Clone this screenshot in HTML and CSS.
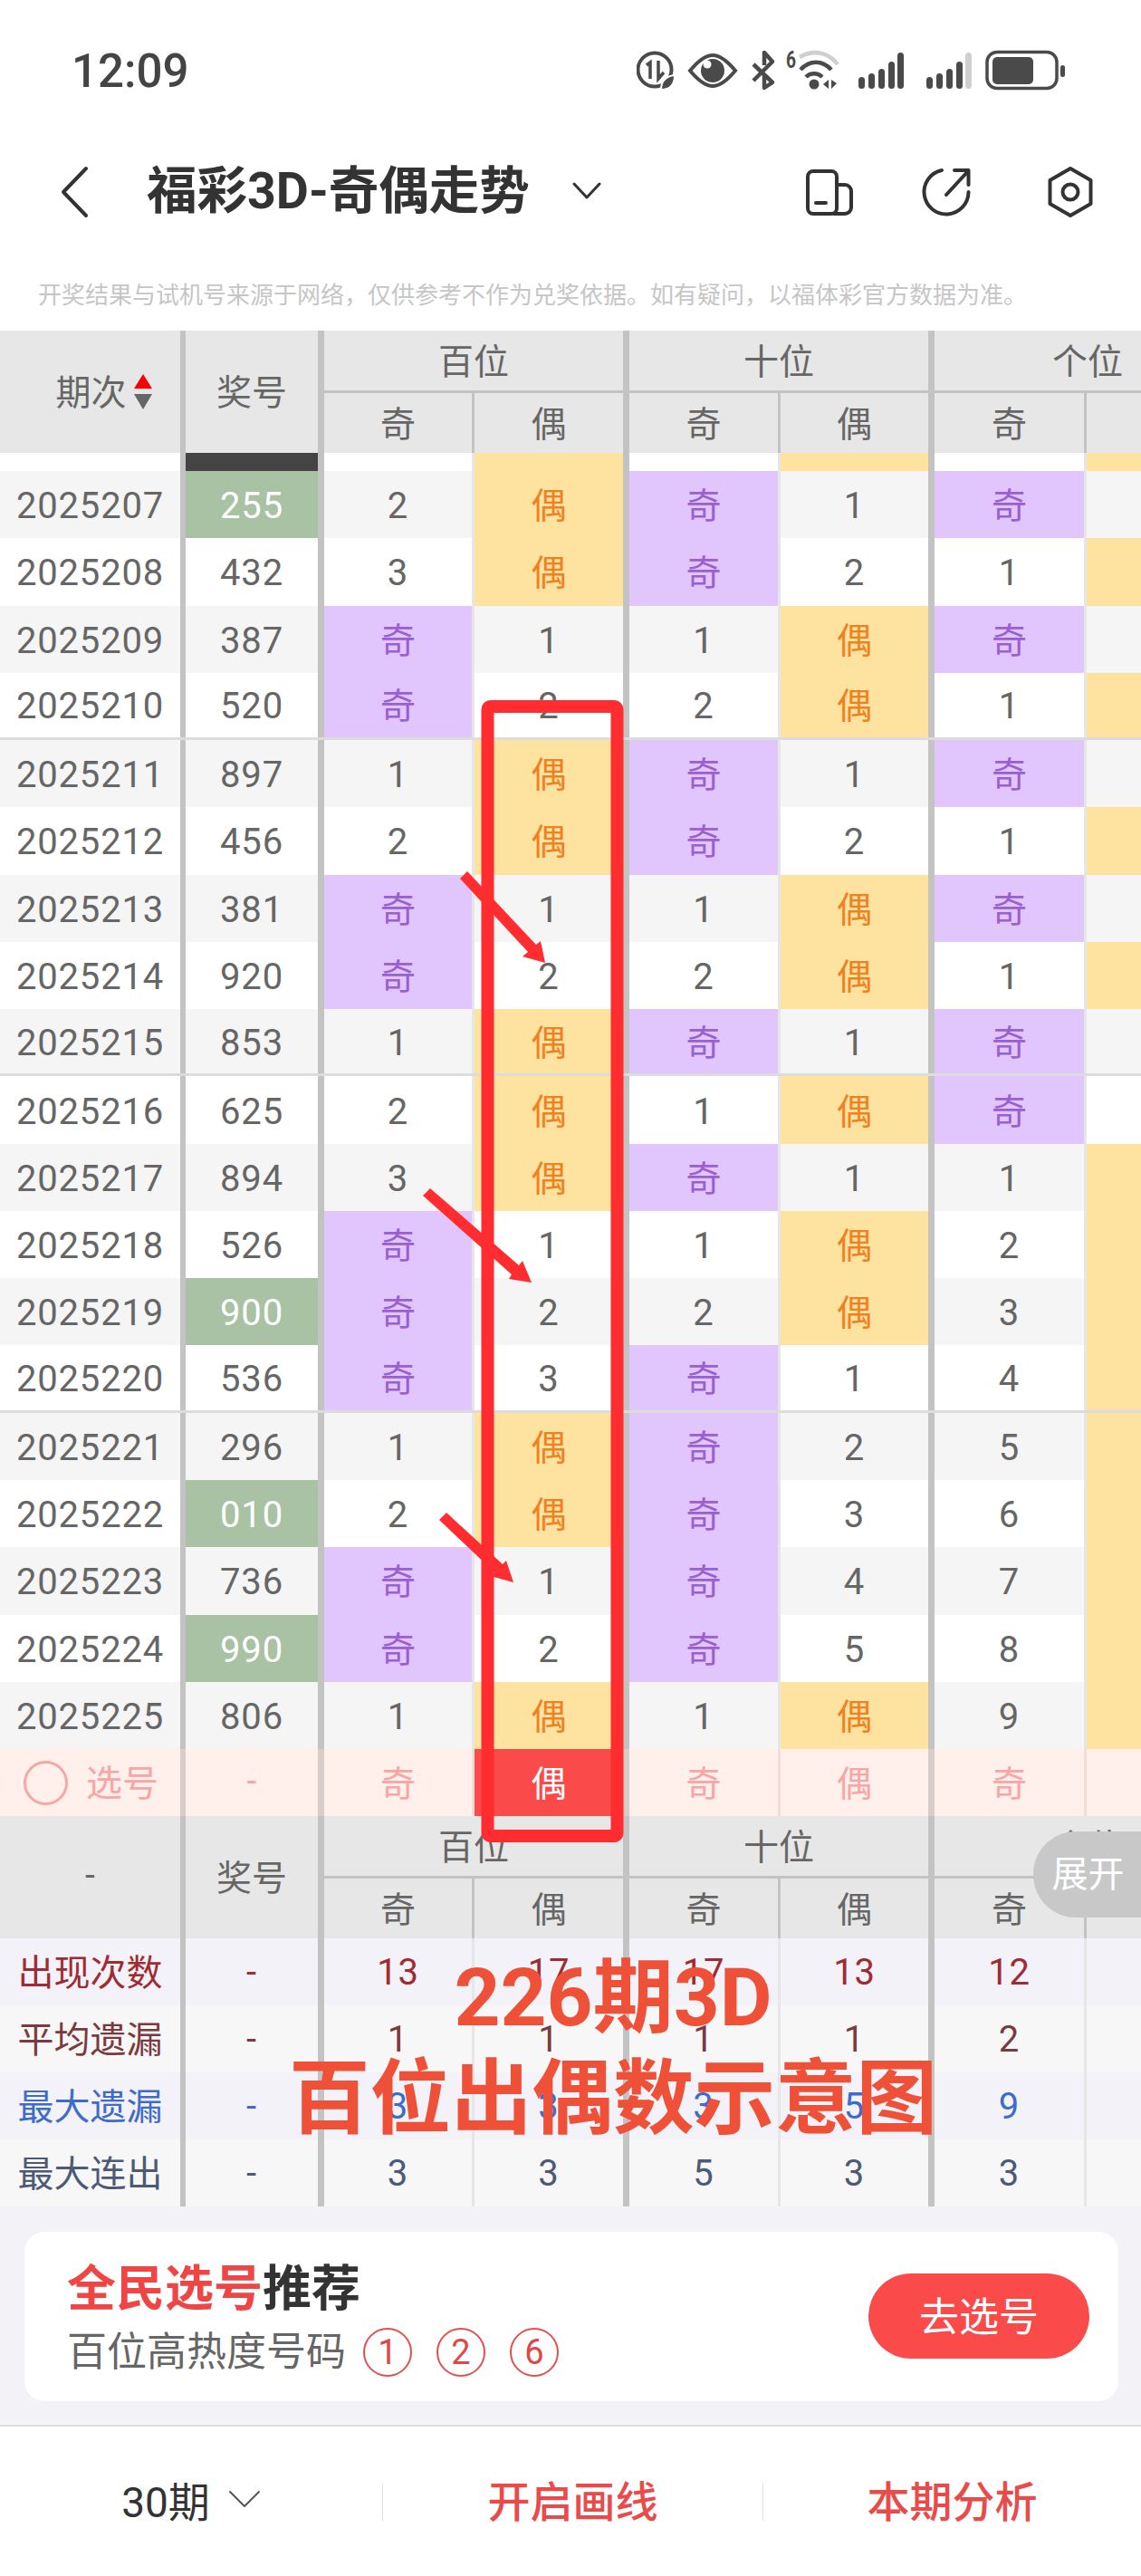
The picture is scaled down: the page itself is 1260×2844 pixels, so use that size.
FILE: index.html
```html
<!DOCTYPE html>
<html lang="zh-CN">
<head>
<meta charset="utf-8">
<title>福彩3D-奇偶走势</title>
<link rel="stylesheet" href="styles.css">
</head>
<body>
<div class="page">
  <header class="status">
    <span class="clock">12:09</span>
    <svg class="status-icons" width="473" height="56" viewBox="703 50 473 56" fill="none" stroke="#4a4a4a">
      <circle cx="723" cy="77" r="18.5" stroke-width="4"/>
      <path d="M714 72l4-3v18M727 67v20l6-7" stroke-width="3.5"/>
      <path d="M730 99c0-11 7-15 15-16 0 10-5 16-15 16z" fill="#4a4a4a" stroke="#fff" stroke-width="2"/>
      <path d="M762 78c10-12 18-17 25-17s15 5 25 17c-10 12-18 17-25 17s-15-5-25-17z" stroke-width="4"/>
      <circle cx="787" cy="78" r="13" fill="#4a4a4a" stroke="none"/>
      <circle cx="781" cy="71" r="4.5" fill="#fff" stroke="none"/>
      <path d="M832 71l21 20-9 6V83M844 72V58l9 10-21 21" stroke-width="4.5" stroke-linejoin="round"/>
      <text x="868" y="75" class="six" textLength="11" lengthAdjust="spacingAndGlyphs">6</text>
      <path d="M883 63c16-9 32-5 42 8" stroke="#cfcfcf" stroke-width="4.5"/>
      <path d="M884 77c10-11 24-11 34 0M890 85c5-5 13-5 18 0" stroke-width="4.5"/>
      <circle cx="899" cy="93" r="5.5" fill="#4a4a4a" stroke="none"/>
      <path d="M909 93l6-5v10zM918 88v10l6-6z" fill="#4a4a4a" stroke="none"/>
      <g fill="#4a4a4a" stroke="none">
        <rect x="948" y="85" width="7" height="13" rx="3.5"/>
        <rect x="959" y="81" width="7" height="17" rx="3.5"/>
        <rect x="970" y="76" width="7" height="22" rx="3.5"/>
        <rect x="981" y="68" width="7" height="30" rx="3.5"/>
        <rect x="991" y="58" width="7" height="40" rx="3.5"/>
        <rect x="1023" y="85" width="7" height="13" rx="3.5"/>
        <rect x="1034" y="81" width="7" height="17" rx="3.5"/>
        <rect x="1045" y="76" width="7" height="22" rx="3.5"/>
        <rect x="1056" y="68" width="7" height="30" rx="3.5"/>
        <rect x="1066" y="58" width="7" height="40" rx="3.5" fill="#cfcfcf"/>
        <rect x="1096" y="63" width="45" height="30" rx="5"/>
        <rect x="1171" y="72" width="5" height="13" rx="2.5"/>
      </g>
      <rect x="1090" y="57.5" width="77" height="40" rx="11" stroke-width="3.5"/>
    </svg>
  </header>

  <nav class="nav">
    <svg class="back" width="32" height="58" viewBox="66 182 32 58" fill="none" stroke="#333" stroke-width="4" stroke-linecap="round" stroke-linejoin="round"><path d="M95 185L70 211l25 26"/></svg>
    <h1 class="title">福彩3D-奇偶走势</h1>
    <svg class="caret" width="32" height="20" viewBox="0 0 32 20" fill="none" stroke="#333" stroke-width="3" stroke-linecap="round" stroke-linejoin="round"><path d="M2 2l14 15L30 2"/></svg>
    <svg class="nav-icons" width="322" height="60" viewBox="888 182 322 60" fill="none" stroke="#333" stroke-width="4" stroke-linecap="round" stroke-linejoin="round">
      <rect x="892" y="189" width="32" height="47" rx="6"/>
      <path d="M924 204h9a7 7 0 0 1 7 7v18a7 7 0 0 1-7 7h-12M901 224h11"/>
      <path d="M1040 188a24.500 24.500 0 1 0 29.500 24M1045 215l24-26M1054 188h15.500v16"/>
      <path d="M1182 186l22.500 13v26L1182 238l-22.500-13v-26z"/>
      <circle cx="1182" cy="212" r="8.500"/>
    </svg>
  </nav>

  <p class="notice">开奖结果与试机号来源于网络，仅供参考不作为兑奖依据。如有疑问，以福体彩官方数据为准。</p>

  <section class="chart">
    <div class="grid-head">
      <div class="hcell span-rows period-head">期次<span class="sort"><i class="up"></i><i class="down"></i></span></div>
      <div class="hcell span-rows num-head">奖号</div>
      <div class="hcell group">百位</div>
      <div class="hcell group">十位</div>
      <div class="hcell group group-last">个位</div>
      <div class="hcell sub">奇</div><div class="hcell sub end">偶</div>
      <div class="hcell sub">奇</div><div class="hcell sub end">偶</div>
      <div class="hcell sub">奇</div><div class="hcell sub last"></div>
    </div>

    <div class="row-cut">
      <div class="row plain"><span class="cell"></span><span class="cell dark"></span><span class="cell"></span><span class="cell even"></span><span class="cell"></span><span class="cell even"></span><span class="cell"></span><span class="cell even"></span></div>
    </div>

    <div class="row"><span class="cell">2025207</span><span class="cell win">255</span><span class="cell">2</span><span class="cell even">偶</span><span class="cell odd">奇</span><span class="cell">1</span><span class="cell odd">奇</span><span class="cell"></span></div>
    <div class="row"><span class="cell">2025208</span><span class="cell">432</span><span class="cell">3</span><span class="cell even">偶</span><span class="cell odd">奇</span><span class="cell">2</span><span class="cell">1</span><span class="cell even"></span></div>
    <div class="row"><span class="cell">2025209</span><span class="cell">387</span><span class="cell odd">奇</span><span class="cell">1</span><span class="cell">1</span><span class="cell even">偶</span><span class="cell odd">奇</span><span class="cell"></span></div>
    <div class="row mark"><span class="cell">2025210</span><span class="cell">520</span><span class="cell odd">奇</span><span class="cell">2</span><span class="cell">2</span><span class="cell even">偶</span><span class="cell">1</span><span class="cell even"></span></div>
    <div class="row"><span class="cell">2025211</span><span class="cell">897</span><span class="cell">1</span><span class="cell even">偶</span><span class="cell odd">奇</span><span class="cell">1</span><span class="cell odd">奇</span><span class="cell"></span></div>
    <div class="row"><span class="cell">2025212</span><span class="cell">456</span><span class="cell">2</span><span class="cell even">偶</span><span class="cell odd">奇</span><span class="cell">2</span><span class="cell">1</span><span class="cell even"></span></div>
    <div class="row"><span class="cell">2025213</span><span class="cell">381</span><span class="cell odd">奇</span><span class="cell">1</span><span class="cell">1</span><span class="cell even">偶</span><span class="cell odd">奇</span><span class="cell"></span></div>
    <div class="row"><span class="cell">2025214</span><span class="cell">920</span><span class="cell odd">奇</span><span class="cell">2</span><span class="cell">2</span><span class="cell even">偶</span><span class="cell">1</span><span class="cell even"></span></div>
    <div class="row mark"><span class="cell">2025215</span><span class="cell">853</span><span class="cell">1</span><span class="cell even">偶</span><span class="cell odd">奇</span><span class="cell">1</span><span class="cell odd">奇</span><span class="cell"></span></div>
    <div class="row"><span class="cell">2025216</span><span class="cell">625</span><span class="cell">2</span><span class="cell even">偶</span><span class="cell">1</span><span class="cell even">偶</span><span class="cell odd">奇</span><span class="cell"></span></div>
    <div class="row"><span class="cell">2025217</span><span class="cell">894</span><span class="cell">3</span><span class="cell even">偶</span><span class="cell odd">奇</span><span class="cell">1</span><span class="cell">1</span><span class="cell even"></span></div>
    <div class="row"><span class="cell">2025218</span><span class="cell">526</span><span class="cell odd">奇</span><span class="cell">1</span><span class="cell">1</span><span class="cell even">偶</span><span class="cell">2</span><span class="cell even"></span></div>
    <div class="row"><span class="cell">2025219</span><span class="cell win">900</span><span class="cell odd">奇</span><span class="cell">2</span><span class="cell">2</span><span class="cell even">偶</span><span class="cell">3</span><span class="cell even"></span></div>
    <div class="row mark"><span class="cell">2025220</span><span class="cell">536</span><span class="cell odd">奇</span><span class="cell">3</span><span class="cell odd">奇</span><span class="cell">1</span><span class="cell">4</span><span class="cell even"></span></div>
    <div class="row"><span class="cell">2025221</span><span class="cell">296</span><span class="cell">1</span><span class="cell even">偶</span><span class="cell odd">奇</span><span class="cell">2</span><span class="cell">5</span><span class="cell even"></span></div>
    <div class="row"><span class="cell">2025222</span><span class="cell win">010</span><span class="cell">2</span><span class="cell even">偶</span><span class="cell odd">奇</span><span class="cell">3</span><span class="cell">6</span><span class="cell even"></span></div>
    <div class="row"><span class="cell">2025223</span><span class="cell">736</span><span class="cell odd">奇</span><span class="cell">1</span><span class="cell odd">奇</span><span class="cell">4</span><span class="cell">7</span><span class="cell even"></span></div>
    <div class="row"><span class="cell">2025224</span><span class="cell win">990</span><span class="cell odd">奇</span><span class="cell">2</span><span class="cell odd">奇</span><span class="cell">5</span><span class="cell">8</span><span class="cell even"></span></div>
    <div class="row"><span class="cell">2025225</span><span class="cell">806</span><span class="cell">1</span><span class="cell even">偶</span><span class="cell">1</span><span class="cell even">偶</span><span class="cell">9</span><span class="cell even"></span></div>

    <div class="row pick">
      <span class="cell pick-label"><i class="ring"></i>选号</span><span class="cell">-</span><span class="cell">奇</span><span class="cell chosen">偶</span><span class="cell">奇</span><span class="cell">偶</span><span class="cell">奇</span><span class="cell"></span>
    </div>

    <div class="grid-head">
      <div class="hcell span-rows">-</div>
      <div class="hcell span-rows num-head">奖号</div>
      <div class="hcell group">百位</div>
      <div class="hcell group">十位</div>
      <div class="hcell group group-last">个位</div>
      <div class="hcell sub">奇</div><div class="hcell sub end">偶</div>
      <div class="hcell sub">奇</div><div class="hcell sub end">偶</div>
      <div class="hcell sub">奇</div><div class="hcell sub last"></div>
    </div>

    <div class="row stat s-count"><span class="cell">出现次数</span><span class="cell">-</span><span class="cell">13</span><span class="cell">17</span><span class="cell">17</span><span class="cell">13</span><span class="cell">12</span><span class="cell"></span></div>
    <div class="row stat s-avg"><span class="cell">平均遗漏</span><span class="cell">-</span><span class="cell">1</span><span class="cell">1</span><span class="cell">1</span><span class="cell">1</span><span class="cell">2</span><span class="cell"></span></div>
    <div class="row stat s-max"><span class="cell">最大遗漏</span><span class="cell">-</span><span class="cell">3</span><span class="cell">3</span><span class="cell">3</span><span class="cell">5</span><span class="cell">9</span><span class="cell"></span></div>
    <div class="row stat s-run"><span class="cell">最大连出</span><span class="cell">-</span><span class="cell">3</span><span class="cell">3</span><span class="cell">5</span><span class="cell">3</span><span class="cell">3</span><span class="cell"></span></div>
  </section>

  <section class="rec-wrap">
    <div class="rec-card">
      <div class="rec-text">
        <h2 class="rec-title"><em>全民选号</em>推荐</h2>
        <div class="rec-sub"><span>百位高热度号码</span><b class="ball">1</b><b class="ball">2</b><b class="ball">6</b></div>
      </div>
      <button class="rec-btn">去选号</button>
    </div>
  </section>

  <footer class="bar">
    <div class="bar-item period">30期<svg width="36" height="20" viewBox="0 0 36 20" fill="none" stroke="#555" stroke-width="2" stroke-linecap="round" stroke-linejoin="round"><path d="M2 2l16 16L34 2"/></svg></div>
    <div class="bar-item accent">开启画线</div>
    <div class="bar-item accent">本期分析</div>
  </footer>

  <button class="expand">展开</button>

  <svg class="marks" width="1260" height="2844" viewBox="0 0 1260 2844" fill="#ff2d30">
    <rect x="538.500" y="780" width="143" height="1247" rx="3" fill="none" stroke="#ff2d30" stroke-width="14"/>
    <polygon points="516,962 592,1043 597,1039 602,1063 577,1056 583,1051 508,970"/>
    <polygon points="475,1312 573,1397 577,1392 587,1416 562,1412 565,1407 467,1320"/>
    <polygon points="493,1670 555,1727 559,1723 567,1747 542,1740 546,1736 485,1678"/>
  </svg>

  <div class="caption">
    <div class="cap-one">226期3D</div>
    <div class="cap-two">百位出偶数示意图</div>
  </div>
</div>
</body>
</html>
```
FILE: styles.css
```css
* { box-sizing: border-box; }
html, body { margin: 0; padding: 0; background: #fff; }
body { font-family: Roboto, "Noto Sans CJK SC", sans-serif; color: #666; }
.page { position: relative; width: 1260px; height: 2844px; overflow: hidden; display: flex; flex-direction: column; }

.status { flex: none; height: 156px; display: flex; align-items: center; justify-content: space-between; padding: 0 84px 0 79px; }
.clock { font-size: 51px; font-weight: 500; color: #444; }
.status-icons { display: block; }
.six { font-family: Roboto, sans-serif; font-weight: 700; font-size: 26px; fill: #4a4a4a; stroke: none; }

.nav { flex: none; height: 112px; display: flex; align-items: center; padding: 0 50px 0 66px; }
.back { flex: none; }
.title { margin: 0 0 0 64px; font-size: 55.5px; font-weight: 700; color: #333; white-space: nowrap; line-height: 70px; }
.caret { flex: none; margin-left: 47px; margin-top: -2px; }
.nav-icons { flex: none; margin-left: auto; }

.notice { flex: none; margin: 0; height: 97px; padding: 40px 0 0 42px; font-size: 26px; line-height: 36px; color: #c6c6c6; white-space: nowrap; }

.chart { flex: none; position: relative; overflow: hidden; }
.grid-head, .row { display: grid; grid-template-columns: 205px 153px 166px 171px 167px 170px 168px 170px; width: 1430px; }

.grid-head { grid-template-rows: 69px 66px; height: 135px; background: #e7e7e7; }
.hcell { display: flex; align-items: center; justify-content: center; font-size: 39px; color: #666; padding-bottom: 5px; }
.span-rows { grid-row: 1 / span 2; border-right: 6px solid #c3c3c3; }
.num-head { border-right-width: 7px; }
.group { grid-column: span 2; border-right: 7px solid #c3c3c3; border-bottom: 3px solid #c3c3c3; padding-bottom: 5px; }
.group-last { border-right: 0; }
.sub { border-right: 3px solid #c3c3c3; }
.sub.end { border-right: 7px solid #c3c3c3; }
.sub.last { border-right: 0; }
.period-head { gap: 8px; padding-left: 30px; }
.sort { display: flex; flex-direction: column; gap: 6px; padding-top: 5px; }
.sort i { display: block; width: 0; height: 0; border-left: 10px solid transparent; border-right: 10px solid transparent; }
.sort .up { border-bottom: 16px solid #f00; }
.sort .down { border-top: 17px solid #666; }

.row { height: 74.27px; background: #fff; }
.row:nth-of-type(odd) { background: #f5f5f5; }
.cell { display: flex; align-items: center; justify-content: center; padding-top: 3px; font-size: 40px; letter-spacing: 0.8px; color: #666; border-right: 3px solid #e6e6e6; }
.cell:nth-child(1) { border-right: 6px solid #c3c3c3; }
.cell:nth-child(2), .cell:nth-child(4), .cell:nth-child(6) { border-right: 7px solid #c3c3c3; }
.cell:nth-child(8) { border-right: 0; }
.row.mark { border-bottom: 3px solid #dcdcdc; }

.odd, .even, .pick .cell { padding-top: 0; padding-bottom: 4px; font-size: 39px; letter-spacing: 0; }
.odd { background: #e1c6fd; color: #9a5fd0; }
.even { background: #fee2a0; color: #f08020; }
.win { background: #a8c2a3; color: #fff; }
.dark { background: #444; }

.row-cut { height: 20px; overflow: hidden; background: #fff; }
.row.plain { height: 20px; background: #fff; }

.row.pick { background: #fff0eb; height: 74px; }
.pick .cell { color: #f9a5a5; border-right-color: #f2dcd6; }
.pick .cell:nth-child(1), .pick .cell:nth-child(2), .pick .cell:nth-child(4), .pick .cell:nth-child(6) { border-right-color: #d8cdca; }
.pick .cell.chosen { background: #fb4a4a; color: #fff; }
.pick .pick-label { gap: 20px; justify-content: flex-start; padding-left: 26px; font-size: 40px; }
.ring { display: block; flex: none; width: 49px; height: 49px; margin-top: 4px; border: 3px solid #f9a5a5; border-radius: 50%; }

.row.stat { height: 74px; background: #f7f7f7; }
.row.s-count, .row.s-max { background: #f2f2f8; }
.stat .cell { padding-top: 0; }
.stat .cell:first-child { font-size: 40px; letter-spacing: 0; padding-bottom: 5px; }
.s-count .cell { color: #9e2c32; }
.s-avg .cell { color: #7a3a40; }
.s-max .cell { color: #3f6bc9; }
.s-run .cell { color: #4c5a75; }

.rec-wrap { flex: 1; background: #f2f2f7; padding: 28px 25px 26px 27px; border-bottom: 2px solid #dcdcdc; }
.rec-card { height: 187px; background: #fff; border-radius: 22px; display: flex; align-items: center; justify-content: space-between; padding: 0 32px 0 47px; }
.rec-text { display: flex; flex-direction: column; gap: 6px; }
.rec-title { margin: 0; font-size: 54px; line-height: 72px; font-weight: 700; color: #333; }
.rec-title em { font-style: normal; color: #f04545; }
.rec-sub { display: flex; align-items: center; gap: 27px; font-size: 44px; line-height: 54px; color: #666; }
.rec-sub span { margin-right: -8px; }
.ball { display: flex; align-items: center; justify-content: center; width: 54px; height: 54px; border: 2px solid #e05050; border-radius: 50%; font-size: 38px; font-weight: 400; color: #e04848; }
.rec-btn { width: 244px; height: 94px; border: 0; border-radius: 47px; background: #fb4a4a; color: #fff; font-family: inherit; font-size: 44px; padding: 0 0 4px; margin-top: -2px; }

.bar { flex: none; height: 167px; background: #fff; display: grid; grid-template-columns: 422px 420px 418px; align-items: center; }
.bar-item { display: flex; align-items: center; justify-content: center; height: 41px; padding-bottom: 8px; font-size: 46px; white-space: nowrap; }
.bar-item + .bar-item { border-left: 1px solid #e0e0e0; }
.period { color: #333; gap: 20px; }
.accent { color: #e94a4a; font-size: 47px; font-weight: 500; }

.expand { position: absolute; left: 1141px; top: 2022px; width: 119px; height: 95px; border: 0; padding: 0 0 7px 2px; border-radius: 47px 0 0 47px; background: #c8c8c8; color: #fff; font-family: inherit; font-size: 40px; }

.marks { position: absolute; left: 0; top: 0; pointer-events: none; }

.caption { position: absolute; left: 0; top: 2150px; width: 1354px; text-align: center; color: #ee5038; font-weight: 700; white-space: nowrap; }
.cap-one { font-size: 89px; line-height: 112px; }
.cap-two { font-size: 89.5px; line-height: 112px; }
```
